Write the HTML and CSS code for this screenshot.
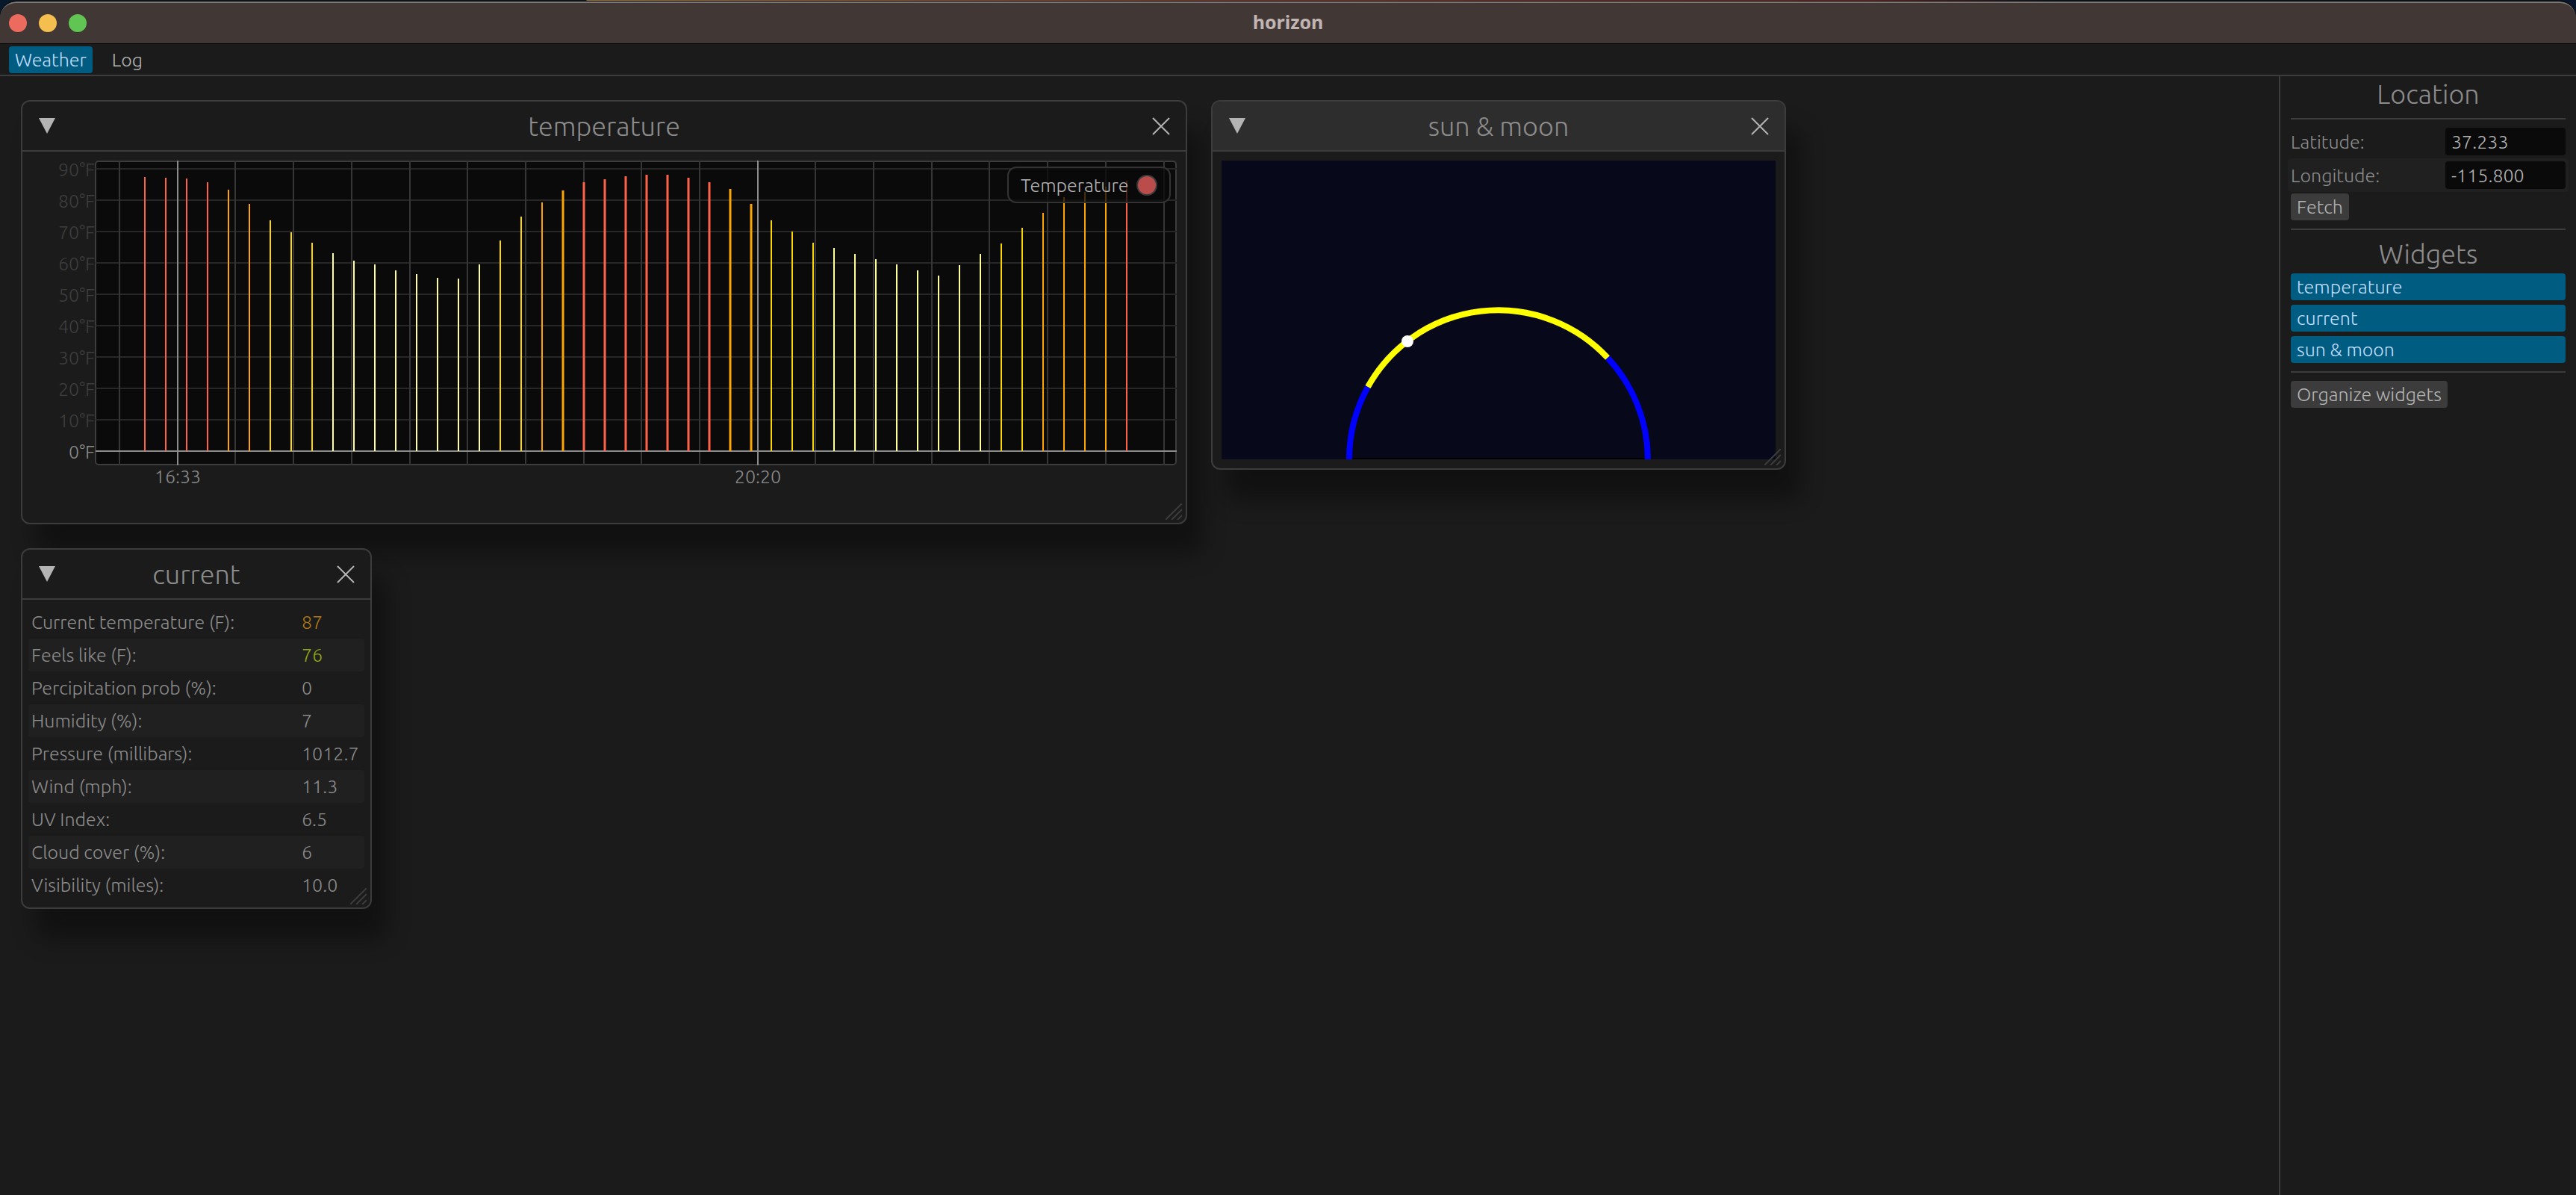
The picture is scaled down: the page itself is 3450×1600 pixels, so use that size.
FILE: index.html
```
<!DOCTYPE html>
<html lang="en">
<head>
<meta charset="utf-8">
<title>horizon</title>
<link rel="stylesheet" href="styles.css">
</head>
<body>
<div class="app">
  <header class="titlebar">
    <div class="lights">
      <button class="light light-close" aria-label="Close"></button>
      <button class="light light-minimize" aria-label="Minimize"></button>
      <button class="light light-zoom" aria-label="Zoom"></button>
    </div>
    <h1 class="app-title">horizon</h1>
  </header>

  <nav class="menubar">
    <button class="tab tab-selected">Weather</button>
    <button class="tab">Log</button>
  </nav>

  <div class="body">
    <main class="desktop">
      <section class="window window-temperature">
        <header class="window-bar">
          <button class="icon-button" aria-label="Collapse"><svg viewBox="0 0 22 22"><path class="glyph-fill" d="M0 0H22L11 21Z"/></svg></button>
          <h2 class="heading">temperature</h2>
          <button class="icon-button" aria-label="Close"><svg viewBox="0 0 22 22"><path class="glyph-line" d="M0 0L22 22M22 0L0 22"/></svg></button>
        </header>
        <div class="plot">
          <svg class="chart" viewBox="42 215 1534 473">
            <rect class="plot-area" x="128" y="216" width="1447" height="406" rx="4"/>
            <path class="grid-y" d="M128 226H1576M128 268H1576M128 310H1576M128 352H1576M128 394H1576M128 436H1576M128 478H1576M128 520H1576M128 562H1576"/>
            <path class="grid-x" d="M160 215V623M315 215V623M393 215V623M471 215V623M549 215V623M626 215V623M704 215V623M782 215V623M859 215V623M937 215V623M1092 215V623M1170 215V623M1248 215V623M1325 215V623M1403 215V623M1481 215V623M1559 215V623"/>
            <path class="grid-major" d="M128 604H1576M238 215V623M1015 215V623"/>
            <path class="bar hot" d="M194 237V604M222 238V604M250 239V604M278 244V604M1509 242V604"/>
            <path class="bar warm" d="M306 254V604M334 273V604M726 271V604M1397 285V604M1425 264V604M1453 257V604M1481 250V604"/>
            <path class="bar mild" d="M362 295V604M390 311V604M418 325V604M670 322V604M698 290V604M1033 295V604M1061 310V604M1089 325V604M1341 326V604M1369 305V604"/>
            <path class="bar cool" d="M446 339V604M474 349V604M502 354V604M530 362V604M558 367V604M586 372V604M614 373V604M642 354V604M1117 332V604M1145 340V604M1173 347V604M1201 354V604M1229 362V604M1257 369V604M1285 355V604M1313 340V604"/>
            <path class="bar hot wide" d="M782 244V604M810 240V604M838 236V604M866 234V604M894 234V604M922 238V604M950 244V604"/>
            <path class="bar warm wide" d="M754 255V604M978 253V604M1006 273V604"/>
            <g class="axis axis-y">
              <text x="127" y="236">90°F</text>
              <text x="127" y="278">80°F</text>
              <text x="127" y="320">70°F</text>
              <text x="127" y="362">60°F</text>
              <text x="127" y="404">50°F</text>
              <text x="127" y="446">40°F</text>
              <text x="127" y="488">30°F</text>
              <text x="127" y="530">20°F</text>
              <text x="127" y="572">10°F</text>
              <text class="axis-major" x="127" y="614">0°F</text>
            </g>
            <g class="axis axis-x">
              <text x="238" y="647">16:33</text>
              <text x="1015" y="647">20:20</text>
            </g>
          </svg>
          <button class="legend">Temperature<span class="legend-dot"></span></button>
        </div>
        <svg class="grip" viewBox="0 0 22 22"><path d="M0 22L22 0M8 22L22 8M16 22L22 16"/></svg>
      </section>

      <section class="window window-sun window-active">
        <header class="window-bar">
          <button class="icon-button" aria-label="Collapse"><svg viewBox="0 0 22 22"><path class="glyph-fill" d="M0 0H22L11 21Z"/></svg></button>
          <h2 class="heading">sun &amp; moon</h2>
          <button class="icon-button" aria-label="Close"><svg viewBox="0 0 22 22"><path class="glyph-line" d="M0 0L22 22M22 0L0 22"/></svg></button>
        </header>
        <div class="sky">
          <svg class="sky-view" viewBox="0 0 742 400">
            <path class="horizon-line" d="M171 399H571"/>
            <path class="arc night" d="M171 400A200 200 0 0 1 196 303M517 264A200 200 0 0 1 571 400"/>
            <path class="arc day" d="M196 303A200 200 0 0 1 517 264"/>
            <circle class="sun" cx="249" cy="242" r="8"/>
          </svg>
        </div>
        <svg class="grip" viewBox="0 0 22 22"><path d="M0 22L22 0M8 22L22 8M16 22L22 16"/></svg>
      </section>

      <section class="window window-current">
        <header class="window-bar">
          <button class="icon-button" aria-label="Collapse"><svg viewBox="0 0 22 22"><path class="glyph-fill" d="M0 0H22L11 21Z"/></svg></button>
          <h2 class="heading">current</h2>
          <button class="icon-button" aria-label="Close"><svg viewBox="0 0 22 22"><path class="glyph-line" d="M0 0L22 22M22 0L0 22"/></svg></button>
        </header>
        <div class="readings-wrap">
          <table class="readings">
            <tr><th scope="row">Current temperature (F):</th><td class="value-hot">87</td></tr>
            <tr><th scope="row">Feels like (F):</th><td class="value-mild">76</td></tr>
            <tr><th scope="row">Percipitation prob (%):</th><td>0</td></tr>
            <tr><th scope="row">Humidity (%):</th><td>7</td></tr>
            <tr><th scope="row">Pressure (millibars):</th><td>1012.7</td></tr>
            <tr><th scope="row">Wind (mph):</th><td>11.3</td></tr>
            <tr><th scope="row">UV Index:</th><td>6.5</td></tr>
            <tr><th scope="row">Cloud cover (%):</th><td>6</td></tr>
            <tr><th scope="row">Visibility (miles):</th><td>10.0</td></tr>
          </table>
        </div>
        <svg class="grip" viewBox="0 0 22 22"><path d="M0 22L22 0M8 22L22 8M16 22L22 16"/></svg>
      </section>
    </main>

    <aside class="sidebar">
      <h2 class="heading">Location</h2>
      <hr class="rule">
      <div class="fields">
        <div class="field">
          <label for="latitude">Latitude:</label>
          <input id="latitude" type="text" value="37.233">
        </div>
        <div class="field field-striped">
          <label for="longitude">Longitude:</label>
          <input id="longitude" type="text" value="-115.800">
        </div>
      </div>
      <button class="button">Fetch</button>
      <hr class="rule">
      <h2 class="heading">Widgets</h2>
      <div class="toggles">
        <button class="toggle" aria-pressed="true">temperature</button>
        <button class="toggle" aria-pressed="true">current</button>
        <button class="toggle" aria-pressed="true">sun &amp; moon</button>
      </div>
      <hr class="rule">
      <button class="button">Organize widgets</button>
    </aside>
  </div>
</div>
</body>
</html>
```
FILE: styles.css
```
* {
  box-sizing: border-box;
}

:root {
  --panel: #1b1b1b;
  --line: #3c3c3c;
  --text: #8c8c8c;
  --text-strong: #b4b4b4;
  --well: #0a0a0a;
  --accent: #005c80;
  --accent-text: #c0deff;
}

body {
  margin: 0;
  padding-top: 1px;
  color: var(--text);
  background: linear-gradient(90deg, #08192b 785px, #a07424 786px, #8a3414 1650px, #7a2018 2500px, #08152b 2750px);
  font: 300 25px/32px Ubuntu, "Noto Sans", sans-serif;
}

button,
input {
  margin: 0;
  border: 0;
  font: inherit;
  color: inherit;
}

button {
  padding: 0;
  background: none;
}

.app {
  display: flex;
  flex-direction: column;
  min-height: calc(100vh - 1px);
  border-top: 1px solid #000;
  border-radius: 22px 22px 0 0;
  background: var(--panel);
  overflow: hidden;
}

.titlebar {
  display: grid;
  grid-template-columns: 1fr auto 1fr;
  align-items: center;
  height: 57px;
  padding: 0 12px;
  border-top: 2px solid #7e7874;
  border-bottom: 1px solid #000;
  border-radius: 22px 22px 0 0;
  background: #413735;
}

.lights {
  display: flex;
  gap: 16px;
}

.light {
  width: 24px;
  height: 24px;
  border-radius: 50%;
}

.light-close { background: #ed6a5e; }
.light-minimize { background: #f5bf4f; }
.light-zoom { background: #61c554; }

.app-title {
  margin: 0;
  padding-bottom: 4px;
  font: 700 25px/32px "Noto Sans", sans-serif;
  color: #c0b5b3;
}

.menubar {
  display: flex;
  gap: 18px;
  padding: 3px 12px 2px;
  border-bottom: 2px solid var(--line);
}

.tab {
  height: 36px;
  padding: 0 8px;
  border-radius: 4px;
  color: var(--text-strong);
}

.tab-selected {
  background: var(--accent);
  color: var(--accent-text);
}

.body {
  flex: 1;
  display: flex;
}

.desktop {
  position: relative;
  flex: 1;
  overflow: hidden;
}

.window {
  position: absolute;
  border: 2px solid var(--line);
  border-radius: 12px;
  background: var(--panel);
  box-shadow: 20px 40px 30px rgba(0, 0, 0, 0.376);
}

.window-temperature {
  left: 28px;
  top: 32px;
  width: 1562px;
}

.window-sun {
  left: 1622px;
  top: 32px;
  width: 770px;
}

.window-current {
  left: 28px;
  top: 632px;
  width: 470px;
}

.window-bar {
  display: flex;
  align-items: center;
  justify-content: space-between;
  height: 67px;
  padding: 0 22px;
  border-bottom: 2px solid var(--line);
  border-radius: 10px 10px 0 0;
}

.window-active .window-bar {
  background: #2d2d2d;
}

.heading {
  margin: 0;
  font-size: 36px;
  line-height: 42px;
  font-weight: 300;
  text-align: center;
}

.icon-button {
  width: 22px;
  height: 22px;
}

.icon-button svg {
  display: block;
  overflow: visible;
}

.glyph-fill {
  fill: var(--text-strong);
}

.glyph-line {
  fill: none;
  stroke: var(--text-strong);
  stroke-width: 2;
}

.grip {
  position: absolute;
  right: 5px;
  bottom: 4px;
  width: 22px;
  height: 22px;
  fill: none;
  stroke: var(--line);
  stroke-width: 2;
}

.plot {
  position: relative;
  padding: 12px;
}

.chart {
  display: block;
  width: 100%;
  overflow: visible;
}

.plot-area {
  fill: var(--well);
  stroke: var(--line);
  stroke-width: 2;
}

.grid-x,
.grid-y,
.grid-major,
.bar {
  fill: none;
  stroke-width: 2;
}

.grid-x { stroke: #363636; }
.grid-y { stroke: #272727; }
.grid-major { stroke: #8c8c8c; }

.wide { stroke-width: 3; }
.hot { stroke: #ff6347; }
.warm { stroke: #ffa500; }
.mild { stroke: #ffd700; }
.cool { stroke: #ffff99; }

.axis { fill: var(--text); }

.axis-y {
  fill: #3e3e3e;
  text-anchor: end;
}

.axis-x { text-anchor: middle; }
.axis-major { fill: var(--text); }

.legend {
  position: absolute;
  top: 20px;
  right: 20px;
  display: flex;
  align-items: center;
  justify-content: space-between;
  width: 219px;
  height: 49px;
  padding: 0 16px;
  border: 2px solid #333;
  border-radius: 12px;
  background: rgba(10, 10, 10, 0.75);
  color: var(--text-strong);
}

.legend-dot {
  width: 28px;
  height: 28px;
  border: 2px solid var(--line);
  border-radius: 50%;
  background: #bb4c4c;
}

.sky {
  padding: 12px;
}

.sky-view {
  display: block;
  width: 100%;
  background: #07091b;
}

.arc {
  fill: none;
  stroke-width: 8;
}

.day { stroke: #ff0; }
.night { stroke: #00f; }
.sun { fill: #fff; }

.horizon-line {
  stroke: #000;
  stroke-width: 2;
}

.readings-wrap {
  padding: 8px;
}

.readings {
  width: 100%;
  border-collapse: collapse;
}

.readings th,
.readings td {
  height: 44px;
  padding: 0 4px;
  font-weight: 300;
  text-align: left;
}

.readings td {
  width: 88px;
}

.readings tr:nth-child(even) > * {
  background: #202020;
}

.readings tr > :first-child { border-radius: 4px 0 0 4px; }
.readings tr > :last-child { border-radius: 0 4px 4px 0; }

.readings .value-hot { color: #b07810; }
.readings .value-mild { color: #93a80f; }

.sidebar {
  width: 398px;
  padding: 3px 14px;
  border-left: 2px solid var(--line);
}

.rule {
  height: 2px;
  margin: 11px 0;
  border: 0;
  background: var(--line);
}

.fields {
  margin: -4px -4px 2px;
}

.field {
  display: flex;
  align-items: center;
  justify-content: space-between;
  height: 45px;
  padding: 0 4px;
  border-radius: 4px;
}

.field-striped {
  background: #202020;
}

.field input {
  width: 161px;
  height: 37px;
  padding: 0 8px;
  border-radius: 4px;
  background: var(--well);
  color: var(--text-strong);
}

.button,
.toggle {
  height: 36px;
  padding: 0 8px;
  border-radius: 4px;
}

.button {
  display: block;
  background: var(--line);
  color: var(--text-strong);
}

.toggles {
  display: flex;
  flex-direction: column;
  gap: 6px;
  margin-top: 5px;
}

.toggle {
  background: var(--accent);
  color: var(--accent-text);
  text-align: left;
}
```
